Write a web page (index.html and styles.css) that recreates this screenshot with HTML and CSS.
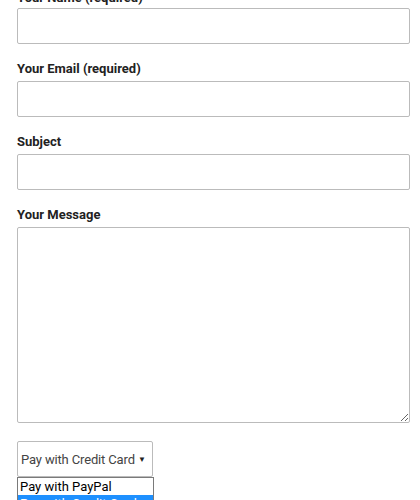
FILE: index.html
```html
<!DOCTYPE html>
<html lang="en">
<head>
    <meta charset="UTF-8">
    <meta name="viewport" content="width=device-width, initial-scale=1.0">
    <title>Contact</title>
    <link rel="stylesheet" href="styles.css">
</head>
<body>

<form class="contact-form">
    <div class="field first">
        <label for="yourName">Your Name (required)</label>
        <input type="text" id="yourName">
    </div>
    <div class="field">
        <label for="yourEmail">Your Email (required)</label>
        <input type="email" id="yourEmail">
    </div>
    <div class="field">
        <label for="subject">Subject</label>
        <input type="text" id="subject">
    </div>
    <div class="field">
        <label for="message">Your Message</label>
        <textarea id="message"></textarea>
    </div>

    <!-- payment select, shown with its list open -->
    <div class="pay-select">
        <div class="select-box">
            <span class="select-value">Pay with Credit Card</span>
            <span class="arrow">&#9660;</span>
        </div>
        <ul class="select-list">
            <li>Pay with PayPal</li>
            <li class="active">Pay with Credit Card</li>
        </ul>
    </div>
</form>

</body>
</html>
```

FILE: styles.css
```css
html, body {
    overflow: hidden;
}
body {
    margin: 0;
    background-color: #ffffff;
    font-family: Roboto, "Liberation Sans", sans-serif;
    color: #222222;
}
.contact-form {
    margin-top: -12px;
    padding-left: 17px;
    width: 393px;
}
.field {
    margin-bottom: 15px;
}
.field label {
    display: block;
    font-size: 13px;
    font-weight: bold;
    line-height: 20px;
    margin-bottom: 2px;
    color: #222222;
}
.field.first label {
    margin-bottom: 0;
}
.field input,
.field textarea {
    display: block;
    box-sizing: border-box;
    width: 100%;
    height: 36px;
    border: 1px solid #bbbbbb;
    border-radius: 2px;
    margin: 0;
    padding: 6px;
    font-size: 14px;
    background-color: #ffffff;
}
.field textarea {
    height: 196px;
    resize: vertical;
}
.pay-select {
    margin-top: 18px;
    width: 137px;
}
.select-box {
    box-sizing: border-box;
    height: 36px;
    width: 136px;
    border: 1px solid #bbbbbb;
    border-radius: 2px;
    display: flex;
    align-items: center;
    justify-content: space-between;
    padding: 0 6px 0 3px;
    font-size: 13px;
    color: #444444;
    white-space: nowrap;
}
.select-value {
    letter-spacing: -0.15px;
}
.arrow {
    font-size: 8px;
    color: #222222;
}
.select-list {
    width: 137px;
    box-sizing: border-box;
    margin: 0;
    padding: 0;
    list-style: none;
    border: 1px solid #7a7a7a;
    background-color: #ffffff;
}
.select-list li {
    font-size: 13px;
    line-height: 17px;
    padding: 0 2px;
    color: #000000;
    white-space: nowrap;
}
.select-list li.active {
    background-color: #1e90ff;
    color: #ffffff;
}
```
